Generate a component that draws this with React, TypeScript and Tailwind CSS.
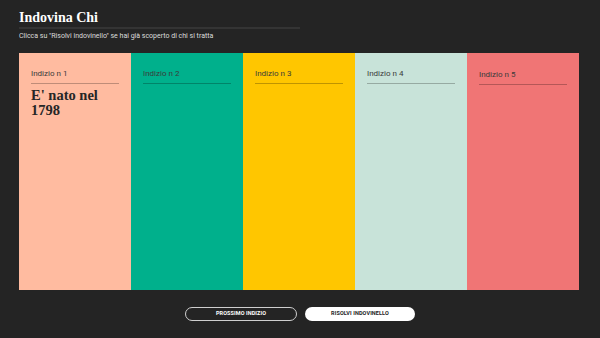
import React from "react";

const CLUES = [
  { label: "Indizio n 1", bg: "bg-[#ffbba0]", text: "E' nato nel 1798", shift: false },
  { label: "Indizio n 2", bg: "bg-[#00b08c]", text: "", shift: false },
  { label: "Indizio n 3", bg: "bg-[#ffc600]", text: "", shift: false },
  { label: "Indizio n 4", bg: "bg-[#c8e3d9]", text: "", shift: false },
  { label: "Indizio n 5", bg: "bg-[#f07575]", text: "", shift: true },
];

export default function App() {
  return (
    <div className="w-[600px] h-[338px] bg-[#242424] flex flex-col px-[19px] font-['Roboto',sans-serif] overflow-hidden">
      {/* header */}
      <div className="pt-[11px] w-[281px] border-b-2 border-[#343434] pb-[2px]">
        <h1 className="text-[14px] leading-[14px] font-bold text-white font-['Liberation_Serif',serif]">
          Indovina Chi
        </h1>
      </div>
      <p className="mt-[3px] text-[7px] leading-[9px] text-[#dcdcdc]">
        Clicca su "Risolvi indovinello" se hai già scoperto di chi si tratta
      </p>

      {/* clue panels */}
      <div className="mt-[12px] w-[560px] h-[237px] grid grid-cols-5">
        {CLUES.map((c) => (
          <div key={c.label} className={`${c.bg} px-[12px] ${c.shift ? "pt-[17px]" : "pt-[16px]"}`}>
            <div className="text-[8px] leading-[10px] text-[#3a3a3a] pb-[4px] border-b border-black/25">
              {c.label}
            </div>
            {c.text && (
              <div className="mt-[4px] w-[70px] text-[14.5px] leading-[15px] font-bold text-[#262626] font-['Liberation_Serif',serif]">
                {c.text}
              </div>
            )}
          </div>
        ))}
      </div>

      {/* actions */}
      <div className="mt-[17px] flex justify-center gap-[8px]">
        <button className="w-[112px] h-[14px] rounded-full border border-[#cfcfcf] text-white text-[5.5px] font-bold tracking-[0.1px] leading-none">
          PROSSIMO INDIZIO
        </button>
        <button className="w-[110px] h-[14px] rounded-full bg-white text-[#222] text-[5.5px] font-bold tracking-[0.1px] leading-none">
          RISOLVI INDOVINELLO
        </button>
      </div>
    </div>
  );
}
